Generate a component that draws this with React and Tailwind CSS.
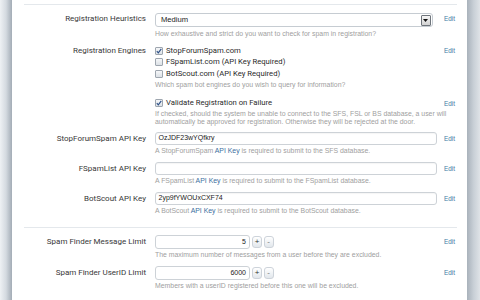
import React from "react";

function Label({ cls, children }) {
  return (
    <div className={`w-[134px] shrink-0 text-right text-[8px] text-[#383838] whitespace-nowrap font-['Roboto',Arial,sans-serif] ${cls}`}>
      {children}
    </div>
  );
}

function Edit({ cls }) {
  return (
    <div className={`ml-[7px] text-[6.4px] text-[#3f7ca3] whitespace-nowrap ${cls}`}>Edit</div>
  );
}

function Desc({ cls, children }) {
  return (
    <div className={`text-[6.9px] leading-[8px] text-[#a0a0a0] whitespace-nowrap ${cls}`}>{children}</div>
  );
}

function Link({ children }) {
  return <span className="text-[#3b6f9e]">{children}</span>;
}

function Check({ checked }) {
  return (
    <span className="w-[8px] h-[8px] shrink-0 border border-[#9ea6af] rounded-[1px] bg-linear-to-b from-[#f6f7f9] to-[#dce1e6] flex items-center justify-center">
      {checked && (
        <svg width="6" height="6" viewBox="0 0 6 6">
          <path d="M0.8 3.2 L2.3 4.8 L5.3 0.8" stroke="#2c4f86" strokeWidth="1.1" fill="none" />
        </svg>
      )}
    </span>
  );
}

function CheckLine({ checked, children }) {
  return (
    <div className="h-[11.5px] flex items-center">
      <Check checked={checked} />
      <span className="ml-[3px] text-[7.7px] text-[#2a2a2a] whitespace-nowrap font-['Roboto',Arial,sans-serif]">{children}</span>
    </div>
  );
}

function TextInput({ value }) {
  return (
    <div className="w-[282px] h-[13px] border border-[#cdd2d7] rounded-[3px] bg-white flex items-center pl-[2.5px] text-[7px] text-[#222] shadow-[inset_0_1px_1px_rgba(0,0,0,0.04)]">
      {value}
    </div>
  );
}

function Spin({ value }) {
  return (
    <div className="flex items-center h-[14px]">
      <div className="w-[95px] h-[14px] border border-[#cdd2d7] rounded-[3px] bg-white flex items-center justify-end pr-[3px] text-[7px] text-[#222]">
        {value}
      </div>
      <div className="ml-[2px] w-[10px] h-[12px] border border-[#cdd3da] rounded-[3px] bg-linear-to-b from-white to-[#e2e7ec] flex items-center justify-center text-[8px] leading-none text-[#333]">
        +
      </div>
      <div className="ml-[1.5px] w-[10px] h-[12px] border border-[#cdd3da] rounded-[3px] bg-linear-to-b from-white to-[#e2e7ec] flex items-center justify-center text-[8px] leading-none text-[#777]">
        -
      </div>
    </div>
  );
}

export default function App() {
  return (
    <div className="w-[480px] h-[300px] flex overflow-hidden bg-white font-['Liberation_Sans',Arial,sans-serif]">
      <div className="w-[12px] shrink-0 bg-linear-to-r from-[#eef1f4] via-[#d4dae0] to-[#a3acb6]" />
      <div className="w-[455px] shrink-0 bg-white">
        <div className="mt-[4px] ml-[12px] mr-[10px] h-px bg-[#e4e8ec]" />

        {/* Registration Heuristics */}
        <div className="flex mt-[8px]">
          <Label cls="h-[14px] leading-[12px]">Registration Heuristics</Label>
          <div className="ml-[9px] w-[282px]">
            <div className="w-[278px] h-[14px] border border-[#c6ccd2] rounded-[3px] bg-white flex items-center pl-[5px] pr-[1.5px] text-[7.6px] text-[#222]">
              <span className="flex-1">Medium</span>
              <span className="w-[10px] h-[11px] border border-[#6e747b] rounded-[1px] bg-linear-to-b from-[#f6f6f6] to-[#d2d2d2] flex items-center justify-center">
                <svg width="5" height="3" viewBox="0 0 5 3">
                  <path d="M0 0 L5 0 L2.5 3 Z" fill="#111" />
                </svg>
              </span>
            </div>
            <Desc cls="mt-[3px]">How exhaustive and strict do you want to check for spam in registration?</Desc>
          </div>
          <Edit cls="h-[14px] leading-[12px]" />
        </div>

        {/* Registration Engines */}
        <div className="flex mt-[7px]">
          <Label cls="h-[11.5px] leading-[11.5px]">Registration Engines</Label>
          <div className="ml-[9px] w-[282px]">
            <CheckLine checked>StopForumSpam.com</CheckLine>
            <CheckLine>FSpamList.com (API Key Required)</CheckLine>
            <CheckLine>BotScout.com (API Key Required)</CheckLine>
            <Desc cls="mt-[1.5px]">Which spam bot engines do you wish to query for information?</Desc>
          </div>
          <Edit cls="h-[11.5px] leading-[11.5px]" />
        </div>

        {/* Validate */}
        <div className="flex mt-[8.5px]">
          <Label cls="h-[11.5px] leading-[11.5px]"></Label>
          <div className="ml-[9px] w-[282px]">
            <CheckLine checked>Validate Registration on Failure</CheckLine>
            <Desc cls="mt-[1px]">
              If checked, should the system be unable to connect to the SFS, FSL or BS database, a user will
              <br />
              automatically be approved for registration. Otherwise they will be rejected at the door.
            </Desc>
          </div>
          <Edit cls="h-[11.5px] leading-[11.5px]" />
        </div>

        {/* StopForumSpam API Key */}
        <div className="flex mt-[6px]">
          <Label cls="h-[13px] leading-[13px]">StopForumSpam API Key</Label>
          <div className="ml-[9px] w-[282px]">
            <TextInput value="OzJDF23wYQfkry" />
            <Desc cls="mt-[2px]">
              A StopForumSpam <Link>API Key</Link> is required to submit to the SFS database.
            </Desc>
          </div>
          <Edit cls="h-[13px] leading-[13px]" />
        </div>

        {/* FSpamList API Key */}
        <div className="flex mt-[7px]">
          <Label cls="h-[13px] leading-[13px]">FSpamList API Key</Label>
          <div className="ml-[9px] w-[282px]">
            <TextInput value="" />
            <Desc cls="mt-[2px]">
              A FSpamList <Link>API Key</Link> is required to submit to the FSpamList database.
            </Desc>
          </div>
          <Edit cls="h-[13px] leading-[13px]" />
        </div>

        {/* BotScout API Key */}
        <div className="flex mt-[7px]">
          <Label cls="h-[13px] leading-[13px]">BotScout API Key</Label>
          <div className="ml-[9px] w-[282px]">
            <TextInput value="2yp9fYWOUxCXF74" />
            <Desc cls="mt-[2px]">
              A BotScout <Link>API Key</Link> is required to submit to the BotScout database.
            </Desc>
          </div>
          <Edit cls="h-[13px] leading-[13px]" />
        </div>

        <div className="mt-[12px] ml-[12px] mr-[10px] h-px bg-[#e4e8ec]" />

        {/* Spam Finder Message Limit */}
        <div className="flex mt-[7px]">
          <Label cls="h-[14px] leading-[14px]">Spam Finder Message Limit</Label>
          <div className="ml-[9px] w-[282px]">
            <Spin value="5" />
            <Desc cls="mt-[2px]">The maximum number of messages from a user before they are excluded.</Desc>
          </div>
          <Edit cls="h-[14px] leading-[14px]" />
        </div>

        {/* Spam Finder UserID Limit */}
        <div className="flex mt-[7px]">
          <Label cls="h-[14px] leading-[14px]">Spam Finder UserID Limit</Label>
          <div className="ml-[9px] w-[282px]">
            <Spin value="6000" />
            <Desc cls="mt-[2px]">Members with a userID registered before this one will be excluded.</Desc>
          </div>
          <Edit cls="h-[14px] leading-[14px]" />
        </div>
      </div>
      <div className="flex-1 bg-linear-to-r from-[#a9b2bb] via-[#c8cfd6] to-[#dfe3e7]" />
    </div>
  );
}
